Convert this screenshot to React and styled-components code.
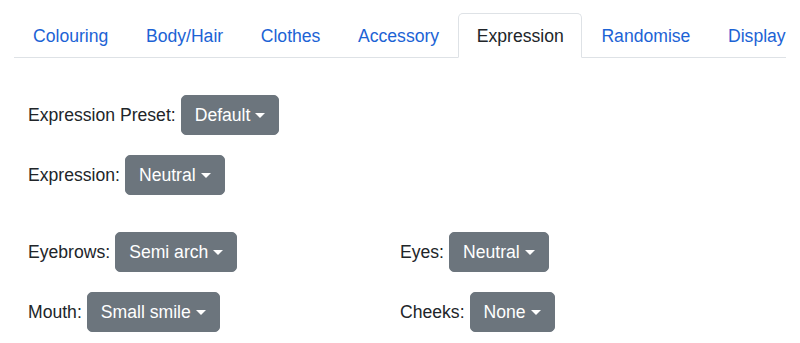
import React from 'react'
import styled, { createGlobalStyle } from 'styled-components'

const tabs = ['Colouring', 'Body/Hair', 'Clothes', 'Accessory', 'Expression', 'Randomise', 'Display']

const GlobalStyle = createGlobalStyle`
    body {
        margin: 0;
        background: #fff;
        font-family: "Liberation Sans", Arial, sans-serif;
        font-size: 17.6px;
        color: #212529;
    }
`

function Dropdown({ label, value }) {
    return (
        <Field>
            <Label>{label}</Label>
            <Button>
                {value}
                <Caret />
            </Button>
        </Field>
    )
}

function App() {
    return (
        <Page>
            <GlobalStyle />
            <Tabs>
                {tabs.map(t => (
                    <Tab key={t} active={t === 'Expression'}>{t}</Tab>
                ))}
            </Tabs>
            <Panel>
                <Stack>
                    <Dropdown label="Expression Preset:" value="Default" />
                    <Dropdown label="Expression:" value="Neutral" />
                </Stack>
                <Grid>
                    <Dropdown label="Eyebrows:" value="Semi arch" />
                    <Dropdown label="Eyes:" value="Neutral" />
                    <Dropdown label="Mouth:" value="Small smile" />
                    <Dropdown label="Cheeks:" value="None" />
                </Grid>
            </Panel>
        </Page>
    )
}

export default App

const Page = styled.div`
    padding: 13px 14px 0;
`

const Tabs = styled.div`
    display: flex;
    border-bottom: 1px solid #dee2e6;
`

const Tab = styled.div.withConfig({ shouldForwardProp: p => p !== 'active' })`
    flex-shrink: 0;
    white-space: nowrap;
    padding: 8.5px 17.6px 8.5px 18px;
    line-height: 26px;
    margin-bottom: -1px;
    border: 1px solid transparent;
    border-radius: 5px 5px 0 0;
    color: #1c63d5;
    cursor: pointer;
    ${p => p.active && `
        color: #212529;
        background: #fff;
        border-color: #dee2e6 #dee2e6 #fff;
    `}
`

const Panel = styled.div`
    padding: 37px 14px 0;
`

const Stack = styled.div`
    display: flex;
    flex-direction: column;
    align-items: flex-start;
    gap: 20px;
`

const Grid = styled.div`
    display: grid;
    grid-template-columns: 372px 1fr;
    row-gap: 20px;
    margin-top: 37px;
`

const Field = styled.div`
    display: flex;
    align-items: center;
    gap: 5px;
`

const Label = styled.label`
    line-height: 26px;
`

const Button = styled.button`
    display: inline-flex;
    align-items: center;
    font-family: inherit;
    font-size: 17.6px;
    line-height: 26px;
    padding: 6px 13px;
    color: #fff;
    background: #6c757d;
    border: 1px solid #6c757d;
    border-radius: 5px;
    cursor: pointer;
`

const Caret = styled.span`
    display: inline-block;
    margin-left: 5px;
    margin-top: 1px;
    border-top: 5px solid #fff;
    border-left: 5px solid transparent;
    border-right: 5px solid transparent;
`
